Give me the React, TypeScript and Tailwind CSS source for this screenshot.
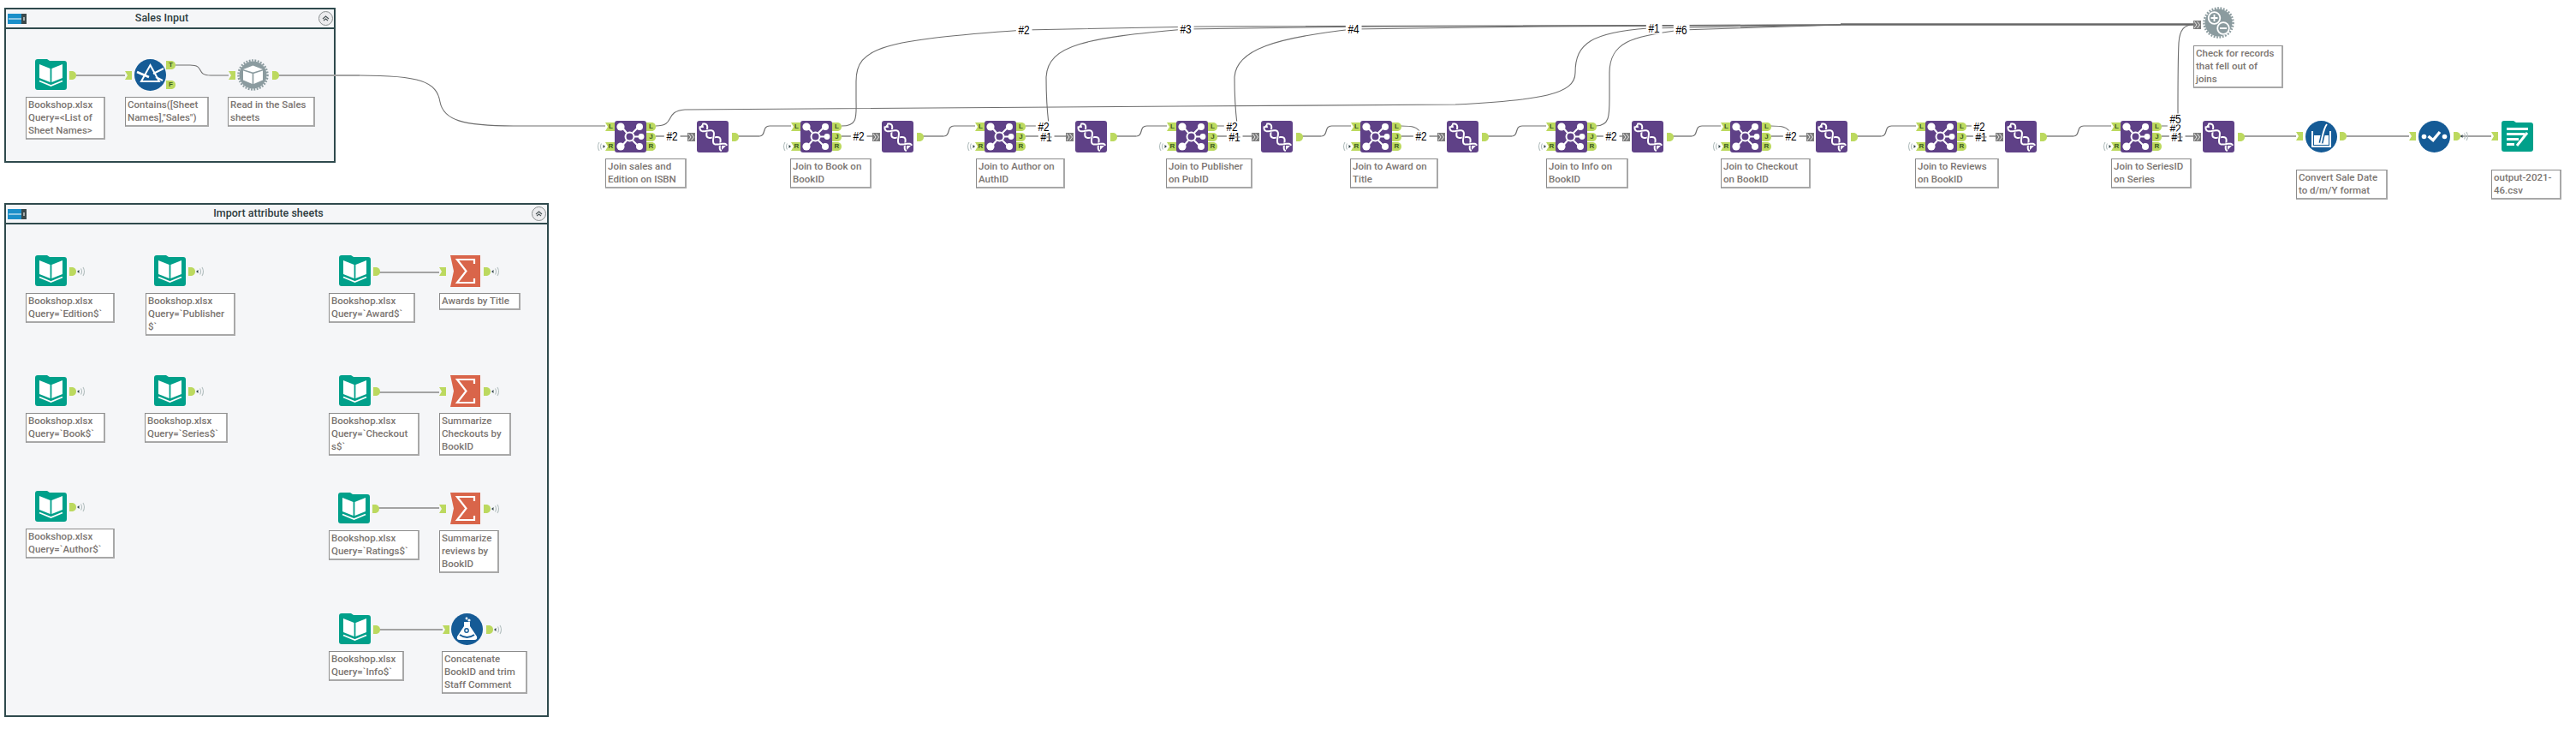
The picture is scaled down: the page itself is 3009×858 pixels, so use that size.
const TEAL = "#00a08a";
const BLUE = "#155b96";
const PURPLE = "#5f4187";
const GREEN = "#bcd95f";

function Place({ x, y, children }: { x: number; y: number; children: React.ReactNode }) {
  return (
    <div className="absolute" style={{ left: x, top: y }}>
      {children}
    </div>
  );
}

function Icon({ children }: { children: React.ReactNode }) {
  return (
    <svg width="37" height="37" viewBox="0 0 37 37" className="block">
      {children}
    </svg>
  );
}

const folder = "M0 3a3 3 0 0 1 3-3H14l3 2H34a3 3 0 0 1 3 3V33a3 3 0 0 1-3 3H3a3 3 0 0 1-3-3Z";

function Pages({ fill = "#fff" }: { fill?: string }) {
  return (
    <g fill={fill}>
      <path d="M5 6L17.6 11V27L5 22Z" />
      <path d="M19.4 11L32 6V22L19.4 27Z" />
      <path d="M5 25.5L18.5 31L32 25.5" fill="none" stroke={fill} strokeWidth="1.8" />
    </g>
  );
}

function BookIcon() {
  return (
    <Icon>
      <path d={folder} fill={TEAL} />
      <Pages />
    </Icon>
  );
}

function GearBase() {
  return (
    <>
      <circle cx="18.5" cy="18.5" r="16" fill="#8b9b9f" />
      <circle cx="18.5" cy="18.5" r="17" fill="none" stroke="#8b9b9f" strokeWidth="2.5" strokeDasharray="1.8 1.6" />
    </>
  );
}

function GearBookIcon() {
  return (
    <Icon>
      <GearBase />
      <path d="M7 12L18.5 7.5L30 12L18.5 15.5Z" fill="#fff" />
      <path d="M7 13.5L17.7 17V29L7 24.5Z" fill="#fff" />
      <path d="M19.3 17L30 13.5V24.5L19.3 29Z" fill="#fff" />
    </Icon>
  );
}

function UnionIcon() {
  return (
    <Icon>
      <GearBase />
      <g fill="none" stroke="#fff" strokeWidth="1.8">
        <circle cx="13.5" cy="13" r="6.8" />
        <path d="M9.5 13H17.5M13.5 9V17" />
        <circle cx="24" cy="25" r="6.8" />
        <path d="M20 25H28" />
      </g>
    </Icon>
  );
}

function FilterIcon() {
  return (
    <Icon>
      <circle cx="18.5" cy="18.5" r="18.5" fill={BLUE} />
      <g fill="none" stroke="#fff" strokeWidth="2">
        <path d="M18.5 7L29 26H8Z" />
        <path d="M3 15L17 21" strokeWidth="2.6" />
        <path d="M22 17L34 11" />
        <path d="M25 21L33 25" />
      </g>
    </Icon>
  );
}

function JoinIcon() {
  return (
    <Icon>
      <rect width="37" height="37" rx="3" fill={PURPLE} />
      <g stroke="#fff" strokeWidth="2" fill="none">
        <path d="M8 7L14 14M28 7L21 14M31 18.5H23M8 30L14 23M28 30L21 23" />
        <circle cx="17.5" cy="18.5" r="5" />
      </g>
      <g fill="#fff">
        <circle cx="7" cy="7" r="4.6" />
        <circle cx="29" cy="7" r="4" />
        <circle cx="31" cy="18.5" r="3.4" />
        <circle cx="7" cy="30" r="4.6" />
        <circle cx="29" cy="30" r="4" />
      </g>
    </Icon>
  );
}

// two strands wound along the icon's diagonal
function strand(sign: number) {
  const pts: string[] = [];
  for (let i = 0; i <= 36; i++) {
    const t = i / 36;
    const off = sign * 3.4 * Math.sin(2 * Math.PI * 1.75 * t + 0.4);
    pts.push(`${(5 + 27 * t + off).toFixed(1)} ${(5 + 27 * t - off).toFixed(1)}`);
  }
  return "M" + pts.join("L");
}

function DnaIcon() {
  return (
    <Icon>
      <rect width="37" height="37" rx="3" fill={PURPLE} />
      <g fill="none" strokeLinejoin="round">
        <path d={strand(1)} stroke="#fff" strokeWidth="2" />
        <path d={strand(-1)} stroke={PURPLE} strokeWidth="3.2" />
        <path d={strand(-1)} stroke="#fff" strokeWidth="2" />
      </g>
      <path d="M3 8L7 3L8 8ZM34 29L29 34L29 29Z" fill="#fff" />
    </Icon>
  );
}

function SigmaIcon() {
  return (
    <Icon>
      <path d="M2 0H37V37H2L6 18.5Z" fill="#d9654a" />
      <path d="M30 10V5H10L20.5 18.5L10 32H30V27" fill="none" stroke="#fff" strokeWidth="2.2" />
    </Icon>
  );
}

function FlaskIcon() {
  return (
    <Icon>
      <circle cx="18.5" cy="18.5" r="18.5" fill={BLUE} />
      <path d="M15 10H22V15L30 27Q31 31 27 31H10Q6 31 7 27L15 15Z" fill="#fff" />
      <path d="M10 25Q18.5 31 27 25" fill="none" stroke={BLUE} strokeWidth="2" />
      <circle cx="18" cy="20" r="2.2" fill="none" stroke={BLUE} strokeWidth="1.4" />
      <circle cx="18" cy="6" r="1.4" fill="#fff" />
      <circle cx="21" cy="8" r="1.6" fill="#fff" />
    </Icon>
  );
}

function FormulaIcon() {
  return (
    <Icon>
      <circle cx="18.5" cy="18.5" r="18.5" fill={BLUE} />
      <path d="M8 12V30H29V12" fill="none" stroke="#fff" strokeWidth="2" />
      <rect x="10" y="17" width="17" height="11" fill="#fff" />
      <path d="M25 4C21 9 20 18 18 26" fill="none" stroke={BLUE} strokeWidth="5" />
      <path d="M25 4C21 9 20 18 18 26" fill="none" stroke="#fff" strokeWidth="2" />
    </Icon>
  );
}

function CheckIcon() {
  return (
    <Icon>
      <circle cx="18.5" cy="18.5" r="18.5" fill={BLUE} />
      <circle cx="6.5" cy="18.5" r="2.8" fill="#fff" />
      <circle cx="30.5" cy="18.5" r="2.8" fill="#fff" />
      <path d="M11.5 18L17 22.5L25 13" fill="none" stroke="#fff" strokeWidth="3.4" />
    </Icon>
  );
}

function OutputIcon() {
  return (
    <Icon>
      <path d={folder} fill={TEAL} />
      <g fill="#fff">
        <rect x="6" y="8" width="25" height="3" />
        <rect x="6" y="14" width="21" height="3" />
        <rect x="6" y="20" width="14" height="3" />
        <rect x="6" y="26" width="9" height="3" />
      </g>
      <path d="M18 29L30 14" stroke="#fff" strokeWidth="3" />
    </Icon>
  );
}

function OutAnchor({ x, y, letter }: { x: number; y: number; letter?: string }) {
  const w = letter ? 11 : 8;
  return (
    <Place x={x} y={y}>
      <div className="relative flex h-[10px] items-center justify-center" style={{ width: w }}>
        <svg width={w} height="10" viewBox={`0 0 ${w} 10`} className="absolute inset-0">
          <path d={`M0 0H${w - 4}Q${w} 1 ${w} 5Q${w} 9 ${w - 4} 10H0Z`} fill={GREEN} />
        </svg>
        {letter && <span className="relative font-['Liberation_Sans',sans-serif] text-[8px] leading-none font-bold text-[#3b5a22]">{letter}</span>}
      </div>
    </Place>
  );
}

function InAnchor({ x, y, letter }: { x: number; y: number; letter?: string }) {
  const w = letter ? 11 : 8;
  return (
    <Place x={x} y={y}>
      <div className="relative flex h-[10px] items-center justify-center pl-[2px]" style={{ width: w }}>
        <svg width={w} height="10" viewBox={`0 0 ${w} 10`} className="absolute inset-0">
          <path d={`M0 0H${w}V10H0L3 5Z`} fill={GREEN} />
        </svg>
        {letter && <span className="relative font-['Liberation_Sans',sans-serif] text-[8px] leading-none font-bold text-[#3b5a22]">{letter}</span>}
      </div>
    </Place>
  );
}

function Chevrons({ x, y }: { x: number; y: number }) {
  return (
    <Place x={x} y={y}>
      <svg width="9" height="10" viewBox="0 0 9 10" className="block">
        <rect width="9" height="10" fill="#7d7d7d" />
        <path d="M1 1L4 5L1 9M4.5 1L7.5 5L4.5 9" fill="none" stroke="#e8e8e8" strokeWidth="1" />
      </svg>
    </Place>
  );
}

function Broadcast({ x, y, flip }: { x: number; y: number; flip?: boolean }) {
  return (
    <Place x={x} y={y}>
      <svg width="10" height="12" viewBox="0 0 10 12" className={flip ? "block -scale-x-100" : "block"}>
        <path d="M0 6L2.5 4V8Z" fill="#33464a" />
        <path d="M4.5 2.5Q6.5 6 4.5 9.5M7 1Q10 6 7 11" fill="none" stroke="#b4c0c0" strokeWidth="1.1" />
      </svg>
    </Place>
  );
}

function Note({ x, y, w, text }: { x: number; y: number; w: number; text: string }) {
  return (
    <div
      className="absolute z-10 border border-r-2 border-b-2 border-[#8c8c8c] border-r-[#a8a8a8] border-b-[#a8a8a8] bg-white px-[2px] py-[1px] font-['Roboto',sans-serif] text-[11.5px] leading-[15px] font-medium whitespace-pre text-[#7c7672]"
      style={{ left: x, top: y, width: w }}
    >
      {text}
    </div>
  );
}

function Tag({ x, y, text, struck }: { x: number; y: number; text: string; struck?: boolean }) {
  return (
    <div
      className={`absolute z-10 -translate-x-1/2 -translate-y-1/2 scale-x-[0.85] bg-white px-[3px] font-['Liberation_Sans',sans-serif] text-[14px] leading-[13px] text-black ${struck ? "line-through decoration-[#777]" : ""}`}
      style={{ left: x, top: y }}
    >
      {text}
    </div>
  );
}

function Box({ x, y, w, h, title }: { x: number; y: number; w: number; h: number; title: string }) {
  return (
    <div
      className="absolute flex flex-col border-2 border-[#2f4a4d] bg-[#f5f6f8]"
      style={{ left: x, top: y, width: w, height: h }}
    >
      <div className="flex h-[23px] shrink-0 items-center justify-between border-b-2 border-[#2f4a4d] pr-[1px] pl-[2px]">
        <svg width="22" height="12" viewBox="0 0 22 12" className="block">
          <rect width="17" height="12" fill="#1a8fc9" />
          <path d="M1 6H16" stroke="#fff" strokeWidth="1" />
          <rect x="16" width="6" height="12" fill="#3c4a4c" />
          <rect x="18" y="4" width="2" height="4" fill="#a5adad" />
        </svg>
        <span className="pr-[25px] font-['Roboto',sans-serif] text-[12.5px] font-medium text-[#2e3d3f]">{title}</span>
        <div className="flex h-[17px] w-[17px] items-center justify-center rounded-full border border-[#8a8f90] bg-[#ececee]">
          <svg width="9" height="7" viewBox="0 0 9 7">
            <path d="M1 4L4.5 1L8 4M2 6L4.5 4L7 6" fill="none" stroke="#4a5557" strokeWidth="1.1" />
          </svg>
        </div>
      </div>
    </div>
  );
}

const joins = [
  { x: 718, nx: 707, nw: 95, note: "Join sales and\nEdition on ISBN" },
  { x: 935, nx: 923, nw: 95, note: "Join to Book on\nBookID" },
  { x: 1150, nx: 1140, nw: 104, note: "Join to Author on\nAuthID" },
  { x: 1374, nx: 1362, nw: 101, note: "Join to Publisher\non PubID" },
  { x: 1589, nx: 1577, nw: 103, note: "Join to Award on\nTitle" },
  { x: 1817, nx: 1806, nw: 96, note: "Join to Info on\nBookID" },
  { x: 2021, nx: 2010, nw: 105, note: "Join to Checkout\non BookID" },
  { x: 2249, nx: 2237, nw: 98, note: "Join to Reviews\non BookID" },
  { x: 2477, nx: 2466, nw: 94, note: "Join to SeriesID\non Series" },
];

const dnas = [814, 1030, 1256, 1473, 1690, 1906, 2121, 2342, 2573];

const tags = [
  { x: 785, y: 159, text: "#2" },
  { x: 1003, y: 159, text: "#2" },
  { x: 1219, y: 148, text: "#2" },
  { x: 1222, y: 160, text: "#1", struck: true },
  { x: 1439, y: 148, text: "#2" },
  { x: 1442, y: 160, text: "#1", struck: true },
  { x: 1660, y: 159, text: "#2" },
  { x: 1882, y: 159, text: "#2" },
  { x: 2092, y: 159, text: "#2" },
  { x: 2312, y: 148, text: "#2" },
  { x: 2314, y: 160, text: "#1", struck: true },
  { x: 2541, y: 150, text: "#2" },
  { x: 2541, y: 139, text: "#5" },
  { x: 2543, y: 160, text: "#1", struck: true },
  { x: 1196, y: 35, text: "#2" },
  { x: 1385, y: 34, text: "#3" },
  { x: 1581, y: 34, text: "#4" },
  { x: 1932, y: 33, text: "#1" },
  { x: 1964, y: 35, text: "#6" },
];

const thickWires = [
  "M89 88H146",
  "M325 88H420",
  "M443 318H513",
  "M443 458H513",
  "M441 593H513",
  "M443 735H517",
  "M2741 159H2814",
  "M2873 159H2910",
];

const thinWires = [
  "M205 76H222C240 76 228 88 246 88H267",
  "M420 88C490 88 510 95 514 119C518 140 540 147 600 147H707",
  "M766 147C790 147 775 130 800 128C1000 124 1400 125 1700 122C1800 117 1840 110 1840 85C1840 50 1860 38 1925 33L2150 29",
  "M983 147C1003 147 1000 135 1000 115V95C1000 55 1030 47 1196 35L1400 31L2150 29",
  "M1198 147H1225V145C1222 120 1222 100 1222 90C1224 52 1270 44 1385 34L1600 31L2150 29",
  "M1421 147H1445V145C1442 120 1442 100 1442 90C1444 58 1490 44 1581 34L1800 31L2150 29",
  "M1636 147C1650 147 1656 148 1660 156",
  "M1864 147C1880 147 1880 135 1880 115V85C1880 50 1905 42 1964 35L2150 29",
  "M2068 147C2082 147 2088 148 2092 156",
  "M2296 147H2315",
  "M2525 147H2544V130C2544 100 2544 70 2545 50C2546 34 2552 29 2562 28.5",
];

const bookNodes = [
  { x: 41, y: 298 },
  { x: 180, y: 298 },
  { x: 396, y: 298 },
  { x: 41, y: 438 },
  { x: 180, y: 438 },
  { x: 396, y: 438 },
  { x: 41, y: 573 },
  { x: 395, y: 575 },
  { x: 396, y: 716 },
];

export default function App() {
  const grayWires: string[] = [];
  const darkWires: string[] = [];
  joins.forEach((j, i) => {
    if (i > 0) {
      const x0 = dnas[i - 1] + 48;
      const x1 = j.x - 11;
      const mid = (x0 + x1) / 2;
      grayWires.push(`M${x0} 159H${mid - 6}`);
      darkWires.push(`M${mid - 6} 159C${mid + 2} 159 ${mid - 3} 147 ${mid + 6} 147H${x1}`);
    }
    grayWires.push(`M${j.x + 48} 159H${dnas[i] - 11}`);
  });
  grayWires.push("M2621 159H2682");

  return (
    <div className="relative h-[858px] w-[3009px] overflow-hidden bg-white">
      <Box x={5} y={9} w={387} h={181} title="Sales Input" />
      <Box x={5} y={237} w={636} h={600} title="Import attribute sheets" />

      <svg width="3009" height="858" className="absolute inset-0" fill="none">
        {thickWires.map((d, i) => (
          <path key={i} d={d} stroke="#a3a3a3" strokeWidth="2" />
        ))}
        {grayWires.map((d, i) => (
          <path key={i} d={d} stroke="#a3a3a3" strokeWidth="2" />
        ))}
        {darkWires.map((d, i) => (
          <path key={i} d={d} stroke="#707070" strokeWidth="1.2" />
        ))}
        {thinWires.map((d, i) => (
          <path key={i} d={d} stroke="#6e6e6e" strokeWidth="1.1" />
        ))}
        <path d="M2150 28.5H2562" stroke="#666" strokeWidth="2.4" />
      </svg>

      {/* sales input */}
      <Place x={41} y={69}><BookIcon /></Place>
      <OutAnchor x={81} y={83} />
      <InAnchor x={146} y={83} />
      <Place x={157} y={69}><FilterIcon /></Place>
      <OutAnchor x={194} y={71} letter="T" />
      <OutAnchor x={194} y={94} letter="F" />
      <InAnchor x={267} y={83} />
      <Place x={277} y={69}><GearBookIcon /></Place>
      <OutAnchor x={318} y={83} />
      <Note x={30} y={113} w={93} text={"Bookshop.xlsx\nQuery=<List of\nSheet Names>"} />
      <Note x={146} y={113} w={98} text={'Contains([Sheet\nNames],"Sales")'} />
      <Note x={266} y={113} w={102} text={"Read in the Sales\nsheets"} />

      {/* attribute sheets */}
      {bookNodes.map((n, i) => (
        <div key={i}>
          <Place x={n.x} y={n.y}><BookIcon /></Place>
          <OutAnchor x={n.x + 40} y={n.y + 14} />
        </div>
      ))}
      <Broadcast x={90} y={311} />
      <Broadcast x={229} y={311} />
      <Broadcast x={90} y={451} />
      <Broadcast x={229} y={451} />
      <Broadcast x={90} y={586} />

      {[298, 438, 575].map((y) => (
        <div key={y}>
          <InAnchor x={513} y={y + 14} />
          <Place x={524} y={y}><SigmaIcon /></Place>
          <OutAnchor x={565} y={y + 14} />
          <Broadcast x={574} y={y + 13} />
        </div>
      ))}
      <InAnchor x={517} y={730} />
      <Place x={527} y={716}><FlaskIcon /></Place>
      <OutAnchor x={568} y={730} />
      <Broadcast x={577} y={729} />

      <Note x={30} y={342} w={104} text={"Bookshop.xlsx\nQuery=`Edition$`"} />
      <Note x={170} y={342} w={105} text={"Bookshop.xlsx\nQuery=`Publisher\n$`"} />
      <Note x={384} y={342} w={101} text={"Bookshop.xlsx\nQuery=`Award$`"} />
      <Note x={513} y={342} w={95} text={"Awards by Title"} />
      <Note x={30} y={482} w={93} text={"Bookshop.xlsx\nQuery=`Book$`"} />
      <Note x={169} y={482} w={97} text={"Bookshop.xlsx\nQuery=`Series$`"} />
      <Note x={384} y={482} w={106} text={"Bookshop.xlsx\nQuery=`Checkout\ns$`"} />
      <Note x={513} y={482} w={84} text={"Summarize\nCheckouts by\nBookID"} />
      <Note x={30} y={617} w={104} text={"Bookshop.xlsx\nQuery=`Author$`"} />
      <Note x={384} y={619} w={106} text={"Bookshop.xlsx\nQuery=`Ratings$`"} />
      <Note x={513} y={619} w={70} text={"Summarize\nreviews by\nBookID"} />
      <Note x={384} y={760} w={88} text={"Bookshop.xlsx\nQuery=`Info$`"} />
      <Note x={516} y={760} w={100} text={"Concatenate\nBookID and trim\nStaff Comment"} />

      {/* main join chain */}
      {joins.map((j) => (
        <div key={j.x}>
          <InAnchor x={j.x - 11} y={143} letter="L" />
          <InAnchor x={j.x - 11} y={166} letter="R" />
          <Broadcast x={j.x - 21} y={165} flip />
          <Place x={j.x} y={141}><JoinIcon /></Place>
          <OutAnchor x={j.x + 37} y={143} letter="L" />
          <OutAnchor x={j.x + 37} y={155} letter="J" />
          <OutAnchor x={j.x + 37} y={166} letter="R" />
          <Note x={j.nx} y={185} w={j.nw} text={j.note} />
        </div>
      ))}
      {dnas.map((x) => (
        <div key={x}>
          <Chevrons x={x - 11} y={155} />
          <Place x={x} y={141}><DnaIcon /></Place>
          <OutAnchor x={x + 41} y={155} />
        </div>
      ))}
      {tags.map((t, i) => (
        <Tag key={i} x={t.x} y={t.y} text={t.text} struck={t.struck} />
      ))}

      <Chevrons x={2562} y={24} />
      <Place x={2573} y={8}><UnionIcon /></Place>
      <Note x={2562} y={53} w={105} text={"Check for records\nthat fell out of\njoins"} />

      <InAnchor x={2682} y={154} />
      <Place x={2693} y={141}><FormulaIcon /></Place>
      <OutAnchor x={2733} y={154} />
      <InAnchor x={2814} y={154} />
      <Place x={2825} y={141}><CheckIcon /></Place>
      <OutAnchor x={2866} y={154} />
      <Broadcast x={2874} y={153} />
      <InAnchor x={2910} y={154} />
      <Place x={2922} y={141}><OutputIcon /></Place>
      <Note x={2682} y={198} w={107} text={"Convert Sale Date\nto d/m/Y format"} />
      <Note x={2910} y={198} w={82} text={"output-2021-\n46.csv"} />
    </div>
  );
}
